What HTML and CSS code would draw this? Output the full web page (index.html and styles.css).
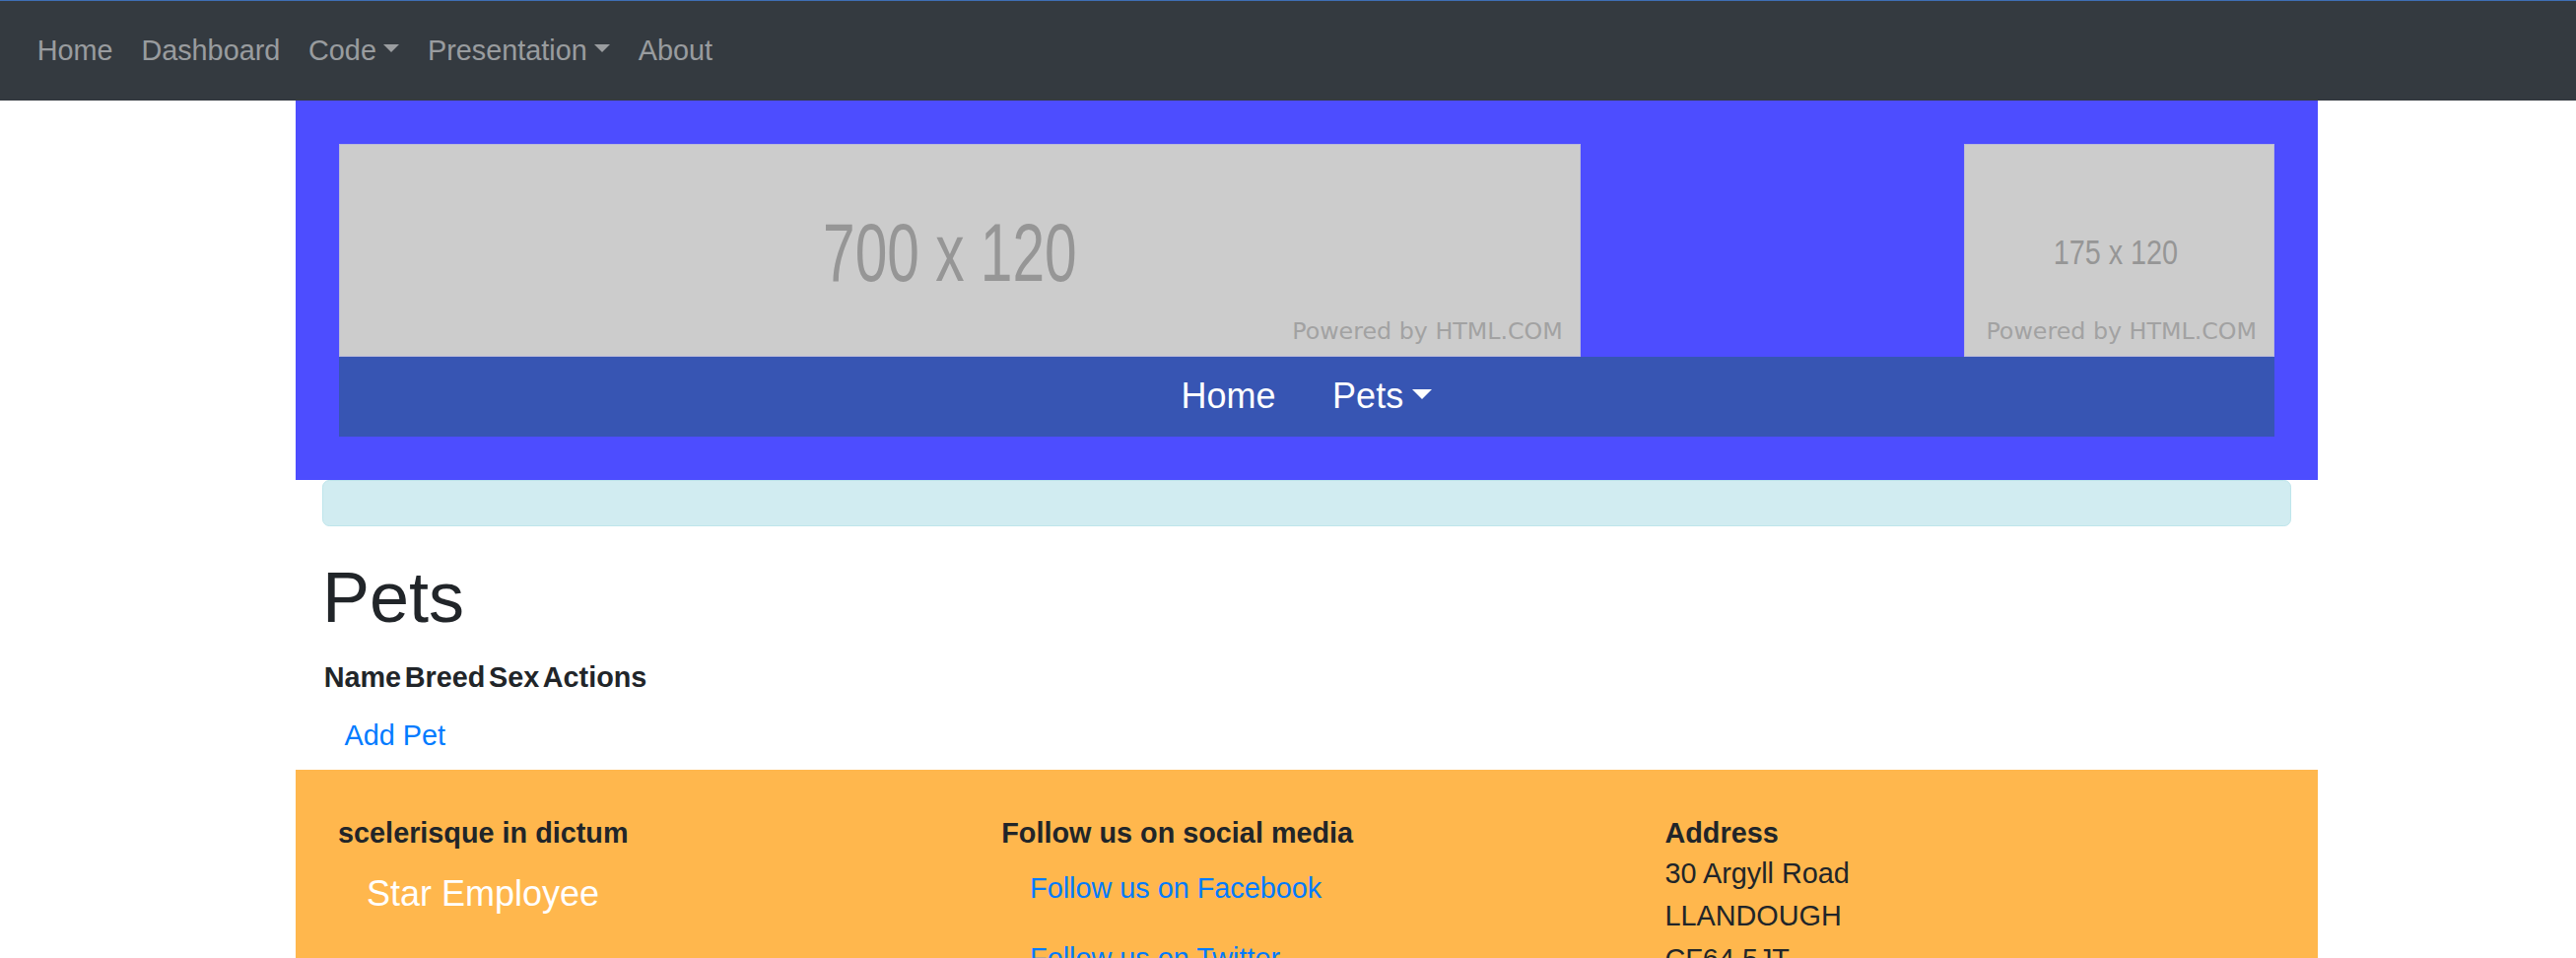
FILE: index.html
```
<!DOCTYPE html>
<html lang="en">
<head>
<meta charset="utf-8">
<title>Pets</title>
<link rel="stylesheet" href="styles.css">
</head>
<body>
<nav class="topbar">
  <ul class="topnav">
    <li><a class="toplink" href="#">Home</a></li>
    <li><a class="toplink" href="#">Dashboard</a></li>
    <li><a class="toplink caret" href="#">Code</a></li>
    <li><a class="toplink caret" href="#">Presentation</a></li>
    <li><a class="toplink" href="#">About</a></li>
  </ul>
</nav>
<div class="shell">
  <div class="page">
    <header class="masthead">
      <div class="banners">
        <div class="ph ph-wide">
          <span class="ph-size ph-size-wide">700 x 120</span>
          <span class="ph-credit">Powered by HTML.COM</span>
        </div>
        <div class="ph ph-small">
          <span class="ph-size ph-size-small">175 x 120</span>
          <span class="ph-credit">Powered by HTML.COM</span>
        </div>
      </div>
      <nav class="subnav">
        <a class="sublink" href="#">Home</a>
        <a class="sublink caret" href="#">Pets</a>
      </nav>
    </header>
    <main class="content">
      <div class="alert"></div>
      <h1 class="title">Pets</h1>
      <table class="pets">
        <thead>
          <tr><th>Name</th><th>Breed</th><th>Sex</th><th>Actions</th></tr>
        </thead>
        <tbody></tbody>
      </table>
      <a class="btn-link" href="#">Add Pet</a>
    </main>
    <footer class="footer">
      <div class="row">
        <div class="col">
          <div class="fhead">scelerisque in dictum</div>
          <ul class="flist">
            <li><a class="star" href="#">Star Employee</a></li>
          </ul>
        </div>
        <div class="col">
          <div class="fhead">Follow us on social media</div>
          <ul class="flist">
            <li><a class="social" href="#">Follow us on Facebook</a></li>
            <li><a class="social" href="#">Follow us on Twitter</a></li>
            <li><a class="social" href="#">Follow us on Instagram</a></li>
          </ul>
        </div>
        <div class="col">
          <div class="fhead">Address</div>
          <address class="addr">
            <span class="aline">30 Argyll Road</span>
            <span class="aline">LLANDOUGH</span>
            <span class="aline">CF64 5JT</span>
          </address>
        </div>
      </div>
    </footer>
  </div>
</div>
</body>
</html>
```
FILE: styles.css
```
html {
  zoom: 1.8;
}
body {
  margin: 0;
  font-family: "Liberation Sans", Arial, sans-serif;
  font-size: 16px;
  line-height: 1.5;
  color: #212529;
  background: #fff;
  overflow: hidden;
}
a {
  text-decoration: none;
}
.caret::after {
  content: "";
  display: inline-block;
  margin-left: .255em;
  vertical-align: .255em;
  border-top: .3em solid;
  border-right: .3em solid transparent;
  border-bottom: 0;
  border-left: .3em solid transparent;
}

/* top navbar */
.topbar {
  background: #343a40;
  border-top: 1px solid #3e6fb5;
  height: 56.5px;
  box-sizing: border-box;
  display: flex;
  align-items: center;
  padding: 0 13px;
}
.topnav {
  list-style: none;
  margin: 0;
  padding: 0;
  display: flex;
}
.toplink {
  display: block;
  padding: 8px;
  color: rgba(255, 255, 255, .5);
}

/* page */
.shell {
  padding-left: 21px;
}
.page {
  width: 1140px;
  margin: 0 auto;
}
.masthead {
  background: #4d4dff;
  padding: 24.4px;
}
.banners {
  display: flex;
  justify-content: space-between;
}
.ph {
  background: #cccccc;
  height: 120px;
  position: relative;
  display: flex;
  align-items: center;
  justify-content: center;
  color: #969696;
  box-shadow: inset 0 0 0 0.5px #b9b9d9;
}
.ph-wide {
  width: 700px;
}
.ph-small {
  width: 175px;
}
.ph-size {
  display: inline-block;
  line-height: 1;
}
.ph-size-wide {
  font-size: 32.6px;
  transform: scaleY(1.41);
  margin: 4px 11px 0 0;
}
.ph-size-small {
  font-size: 16px;
  transform: scaleY(1.22);
  margin: 3px 4px 0 0;
}
.ph-credit {
  position: absolute;
  right: 10px;
  bottom: 7px;
  font-family: "DejaVu Sans", sans-serif;
  font-size: 13.2px;
  line-height: 1;
  color: #a2a2a2;
}
.subnav {
  background: #3755b3;
  height: 45px;
  display: flex;
  justify-content: center;
  align-items: center;
}
.sublink {
  padding: 0 16px;
  font-size: 20px;
  line-height: 30px;
  color: #fff;
}

/* content */
.content {
  padding: 0 15px;
}
.alert {
  background: #d1ecf1;
  border: 1px solid #bee5eb;
  border-radius: 4px;
  padding: 12.6px 20px;
  margin: 0 0 16px;
}
.title {
  font-size: 40px;
  font-weight: 500;
  line-height: 1.2;
  margin: 0 0 8px;
}
.pets {
  border-collapse: collapse;
}
.pets th {
  padding: 1.5px 1px;
  text-align: left;
  font-weight: bold;
}
.btn-link {
  display: inline-block;
  padding: 6.5px 12px;
  border: 1px solid transparent;
  color: #007bff;
}

/* footer */
.footer {
  background: #ffb74d;
  padding: 24px;
  height: 300px;
}
.row {
  display: flex;
  margin: 0 -15px;
}
.col {
  flex: 0 0 33.3333%;
  box-sizing: border-box;
  padding: 0 15px;
}
.fhead {
  font-weight: bold;
}
.flist {
  list-style: none;
  margin: 0;
  padding: 0;
}
.star {
  display: block;
  padding: 7px 16px;
  font-size: 20px;
  color: #fff;
}
.social {
  display: block;
  padding: 7.5px 16px;
  color: #007bff;
}
.addr {
  font-style: normal;
  display: flex;
  flex-direction: column;
}
.aline {
  line-height: 24px;
}
.addr .aline:first-child {
  margin-top: -1px;
}
```
